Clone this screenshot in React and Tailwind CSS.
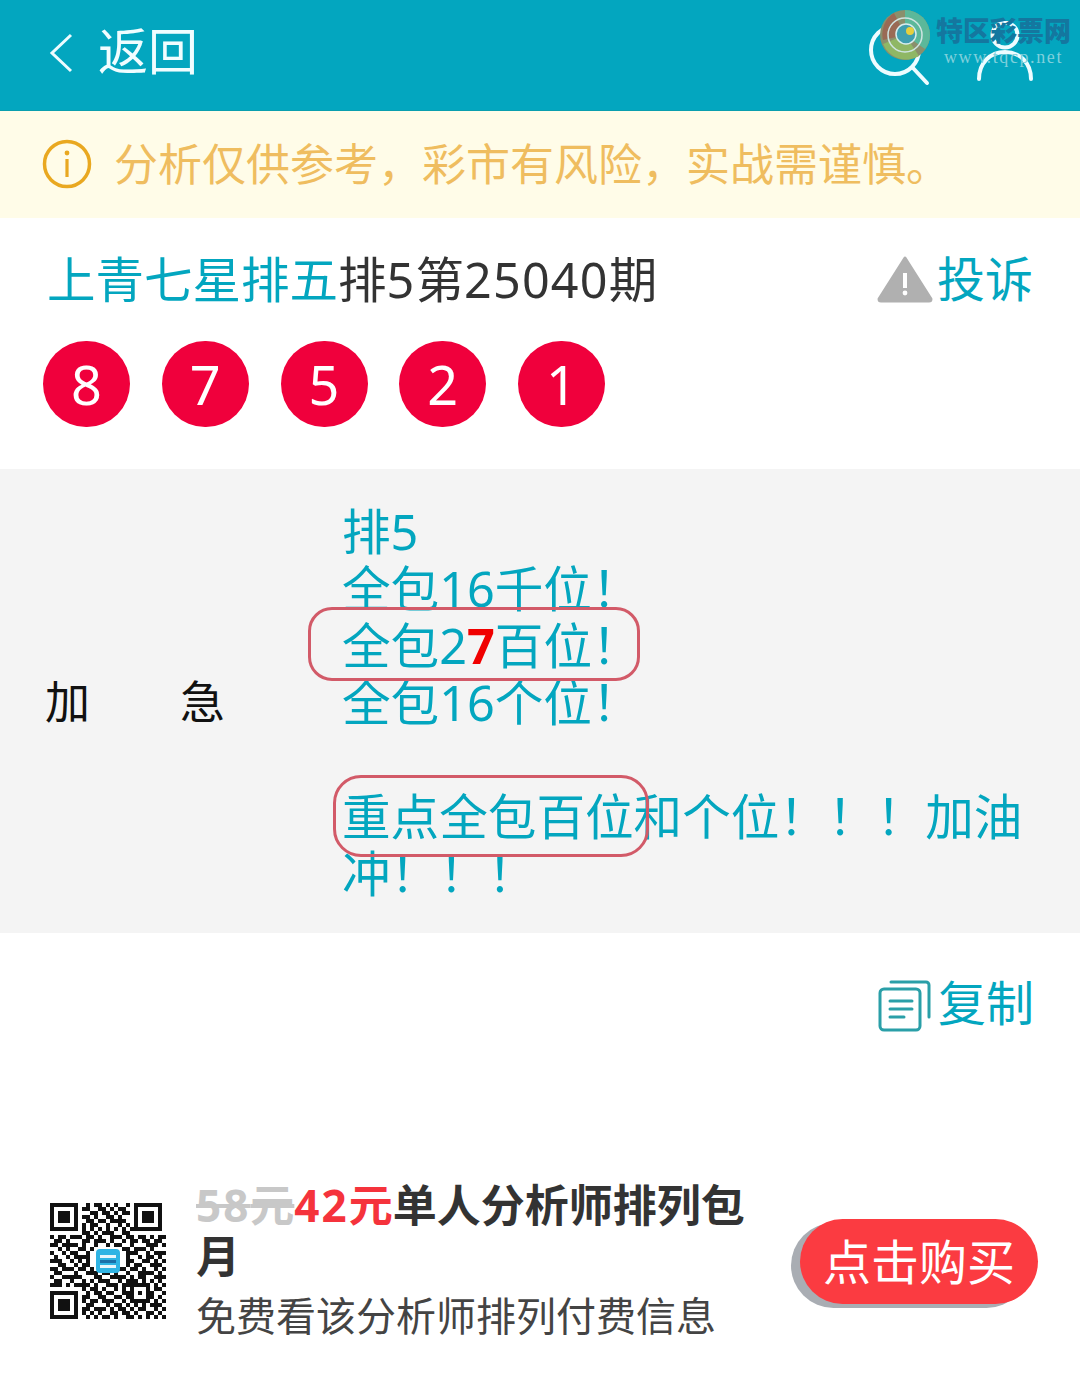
import React from "react";

const FONT = "font-['Noto_Sans','Noto_Sans_CJK_SC',sans-serif]";

const QR_ROWS = [
  "11111110010110101001011111110",
  "10000010110011010110010000010",
  "10111010001101101011010111010",
  "10111010110100110100010111010",
  "10111010011011011110010111010",
  "10000010101100100101010000010",
  "11111110101010101010111111110",
  "00000000110101110011000000000",
  "10110111011010011101101101011",
  "01101000110111010010110110110",
  "11011110100100101100100011101",
  "00101001101000000011011101000",
  "10010110010000000001110010111",
  "01001011110000000001001011010",
  "11100101010000000001100110101",
  "00110010110000000001011001110",
  "11011101101011010110110100101",
  "01100010011101101001001111010",
  "10011111000110011110101100111",
  "01100100101011100101110101010",
  "11101011110100111011111110101",
  "00000000101101001010100010110",
  "11111110010110110011101011001",
  "10000010110011001101100011010",
  "10111010101101110010111110101",
  "10111010011000101101010101110",
  "10111010110111010110101100101",
  "10000010101010011011010011010",
  "11111110010101101001101010101",
];

const NUMBERS = ["8", "7", "5", "2", "1"];

const QrCode = () => (
  <svg width="116" height="116" viewBox="0 0 116 116" className="shrink-0">
    {QR_ROWS.map((row, y) =>
      row.split("").map((cell, x) =>
        cell === "1" ? <rect key={`${x}-${y}`} x={x * 4} y={y * 4} width="4" height="4" fill="#111" /> : null
      )
    )}
    <rect x="46" y="46" width="24" height="24" rx="4" fill="#2fb4e4" />
    <rect x="50" y="52" width="16" height="3" fill="#e8f6fc" />
    <rect x="50" y="57" width="16" height="3" fill="#1b6fa8" />
    <rect x="50" y="62" width="16" height="3" fill="#e8f6fc" />
  </svg>
);

const Watermark = () => (
  <div className="absolute left-[880px] top-[8px] flex items-start pointer-events-none">
    <svg width="50" height="54" viewBox="0 0 50 54">
      <circle cx="25" cy="27" r="25" fill="#8a8f6c" />
      <path d="M25 2a25 25 0 0 1 25 25c0 6-2 10-5 14L25 27z" fill="#5cb89a" />
      <path d="M3 36a25 25 0 0 0 36 12L25 27z" fill="#8fb765" />
      <path d="M3 32A25 25 0 0 1 14 5l11 22z" fill="#9a6a55" />
      <circle cx="25" cy="27" r="17" fill="none" stroke="#cfe4e2" strokeWidth="1.5" />
      <circle cx="26" cy="26" r="10" fill="#3f9fb0" stroke="#d8ecec" strokeWidth="1.5" />
      <circle cx="30" cy="23" r="4" fill="#e6cf3e" />
    </svg>
    <div className="ml-[6px] flex flex-col items-center">
      <div className="text-[27px] leading-[30px] mt-[8px] font-black text-[#14779f] whitespace-nowrap">特区彩票网</div>
      <div className="font-['Liberation_Serif',serif] text-[18px] leading-[20px] mt-[1px] tracking-[1.6px] text-[#7fd0dc] whitespace-nowrap">www.tqcp.net</div>
    </div>
  </div>
);

const Header = () => (
  <header className="relative h-[111px] bg-[#03a6bf] border-b border-[#0a9fae] flex items-center pl-[48px] pr-[46px] text-white">
    <svg width="26" height="40" viewBox="0 0 26 40" fill="none" stroke="#eefcff" strokeWidth="3" className="mb-[5px]">
      <path d="M23 2 4 20l19 18" />
    </svg>
    <span className="ml-[24px] text-[50px] leading-none mb-[8px] text-[#f0fdff]">返回</span>
    <div className="ml-auto flex items-center gap-[46px] mb-[7px]">
      <svg width="62" height="70" viewBox="0 0 62 70" fill="none" stroke="#eefcff" strokeWidth="4" strokeLinecap="round">
        <circle cx="27" cy="33" r="24" />
        <path d="M45 51 59 66" />
      </svg>
      <svg width="58" height="62" viewBox="0 0 58 62" fill="none" stroke="#eefcff" strokeWidth="4" strokeLinecap="round">
        <circle cx="29" cy="14" r="12.5" />
        <path d="M3 58c0-16 11-27 26-27s26 11 26 27" />
      </svg>
    </div>
    <Watermark />
  </header>
);

const Notice = () => (
  <div className="h-[107px] bg-[#fffce8] flex items-center pl-[42px] pb-[2px]">
    <svg width="50" height="50" viewBox="0 0 50 50" fill="none" className="shrink-0">
      <circle cx="25" cy="25" r="22.5" stroke="#e9a820" strokeWidth="3.5" />
      <circle cx="25" cy="14" r="2.4" fill="#e9a820" />
      <rect x="23.4" y="20" width="3.2" height="18" fill="#e9a820" />
    </svg>
    <span className="ml-[22px] text-[44px] leading-none text-[#efbd5f] whitespace-nowrap">分析仅供参考，彩市有风险，实战需谨慎。</span>
  </div>
);

const TitleRow = () => (
  <div className="flex items-center justify-between pl-[47px] pr-[47px] pt-[33px]">
    <div className="text-[48.5px] leading-[56px] text-[#333] whitespace-nowrap">
      <span className="text-[#03a6bf]">上青七星排五</span>排<span className="tracking-[1.2px]">5</span>第<span className="tracking-[1.2px]">25040</span>期
    </div>
    <div className="flex items-center text-[#03a6bf] text-[48px] leading-[56px]">
      <svg width="56" height="48" viewBox="0 0 56 48" className="mr-[4px]">
        <path d="M28 3 54 44a2 2 0 0 1-2 2H4a2 2 0 0 1-2-2z" fill="#b0b0b0" stroke="#b0b0b0" strokeWidth="3" strokeLinejoin="round" />
        <rect x="26" y="18" width="4" height="15" fill="#fff" />
        <circle cx="28" cy="38" r="2.4" fill="#fff" />
      </svg>
      投诉
    </div>
  </div>
);

const Numbers = () => (
  <div className="flex gap-[31.75px] pl-[43px] pt-[34px] pb-[42px]">
    {NUMBERS.map((n) => (
      <div key={n} className="w-[87px] h-[86px] rounded-full bg-[#f0003c] text-white text-[54px] leading-none flex items-center justify-center">
        {n}
      </div>
    ))}
  </div>
);

const Analysis = () => (
  <div className="relative bg-[#f4f4f4] h-[464px] flex items-center">
    <div className="w-[342px] flex pl-[45px] text-[45px] text-[#111] leading-none">
      <span className="w-[135px]">加</span>
      <span>急</span>
    </div>
    <div className="w-[691px] pt-[2px] text-[48.6px] leading-[57px] text-[#03a6bf]">
      <div>排5</div>
      <div>全包16千位！</div>
      <div>
        全包2<span className="font-bold text-[#f00000]">7</span>百位！
      </div>
      <div>全包16个位！</div>
      <div className="h-[57px]" />
      <div>重点全包百位和个位！！！加油冲！！！</div>
    </div>
    <div className="absolute left-[308px] top-[138px] w-[332px] h-[74px] rounded-[24px] border-[3px] border-[#d25a68]" />
    <div className="absolute left-[333px] top-[306px] w-[316px] h-[82px] rounded-[28px] border-[3px] border-[#d25a68]" />
  </div>
);

const CopyRow = () => (
  <div className="h-[135px] flex items-center justify-end pr-[46px] pt-[4px] text-[#03a6bf] text-[48px] leading-none">
    <svg width="54" height="54" viewBox="0 0 54 54" fill="none" stroke="#2a9fa8" strokeWidth="3" strokeLinecap="round" className="mr-[6px] mt-[6px]">
      <rect x="2" y="10" width="40" height="41" rx="4" />
      <path d="M13 3h35a3 3 0 0 1 3 3v32" />
      <path d="M12 22h22M12 30h22M12 38h14" />
    </svg>
    复制
  </div>
);

const Footer = () => (
  <div className="flex items-center pl-[50px] pt-[112px]">
    <QrCode />
    <div className="ml-[30px] w-[560px] shrink-0">
      <div className="text-[44px] leading-[51px] font-bold text-[#333]">
        <span className="text-[#c8c8c8] line-through"><span className="tracking-[2px]">58</span>元</span>
        <span className="text-[#f5333c]"><span className="tracking-[2px]">42</span>元</span>单人分析师排列包月
      </div>
      <div className="mt-[9px] text-[40px] leading-[50px] text-[#444] whitespace-nowrap">免费看该分析师排列付费信息</div>
    </div>
    <button className="ml-[44px] mt-[2px] w-[238px] h-[85px] rounded-full bg-[#fb3b41] text-white text-[48px] leading-none shadow-[-9px_4px_0_#a9adb3]">
      点击购买
    </button>
  </div>
);

const App = () => (
  <div className={`w-[1080px] h-[1373px] overflow-hidden bg-white ${FONT}`}>
    <Header />
    <Notice />
    <TitleRow />
    <Numbers />
    <Analysis />
    <CopyRow />
    <Footer />
  </div>
);

export default App;
